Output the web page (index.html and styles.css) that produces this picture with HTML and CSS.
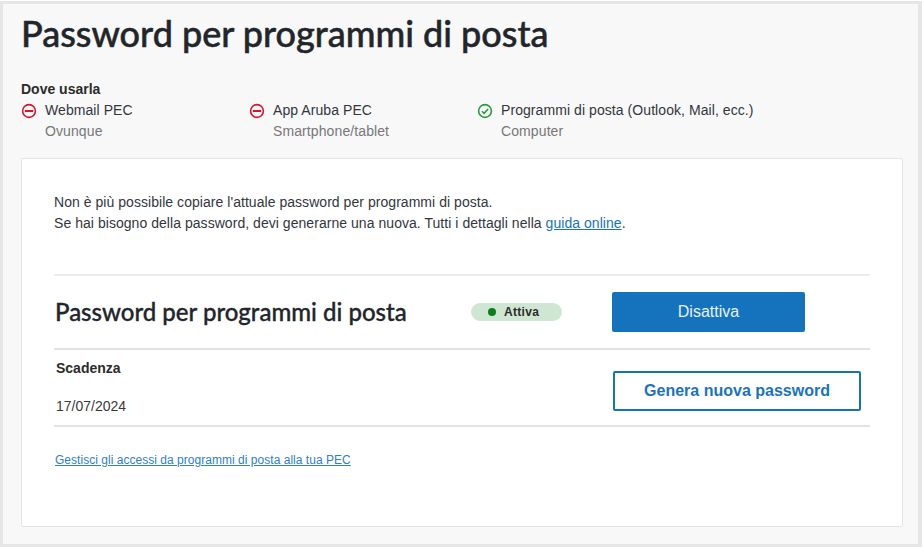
FILE: index.html
```html
<!DOCTYPE html>
<html lang="it">
<head>
<meta charset="utf-8">
<title>Password per programmi di posta</title>
<link rel="stylesheet" href="styles.css">
</head>
<body>
<main class="frame">
  <h1 class="title">Password per programmi di posta</h1>
  <h2 class="where-title">Dove usarla</h2>
  <ul class="where">
    <li class="where-item where-webmail">
      <svg class="icon" viewBox="0 0 16 16" aria-hidden="true"><circle cx="8" cy="8" r="6.4" class="stroke-red"/><path d="M3.8 8h8.4" class="stroke-red bar"/></svg>
      <div><div class="where-name">Webmail PEC</div><div class="where-sub">Ovunque</div></div>
    </li>
    <li class="where-item where-app">
      <svg class="icon" viewBox="0 0 16 16" aria-hidden="true"><circle cx="8" cy="8" r="6.4" class="stroke-red"/><path d="M3.8 8h8.4" class="stroke-red bar"/></svg>
      <div><div class="where-name">App Aruba PEC</div><div class="where-sub">Smartphone/tablet</div></div>
    </li>
    <li class="where-item">
      <svg class="icon" viewBox="0 0 16 16" aria-hidden="true"><circle cx="8" cy="8" r="6.4" class="stroke-green"/><path d="M4.9 8.2l2.2 2.2 4-4.4" class="stroke-green"/></svg>
      <div><div class="where-name">Programmi di posta (Outlook, Mail, ecc.)</div><div class="where-sub">Computer</div></div>
    </li>
  </ul>
  <section class="card">
    <p class="intro">Non è più possibile copiare l'attuale password per programmi di posta.<br>Se hai bisogno della password, devi generarne una nuova. Tutti i dettagli nella <a href="#">guida online</a>.</p>
    <div class="row row-status">
      <h2 class="row-title">Password per programmi di posta</h2>
      <span class="badge"><span class="dot"></span>Attiva</span>
      <button class="btn btn-primary" type="button">Disattiva</button>
    </div>
    <div class="row row-expiry">
      <div class="expiry">
        <div class="expiry-label">Scadenza</div>
        <div class="expiry-date">17/07/2024</div>
      </div>
      <button class="btn btn-outline" type="button">Genera nuova password</button>
    </div>
    <a class="manage" href="#">Gestisci gli accessi da programmi di posta alla tua PEC</a>
  </section>
</main>
</body>
</html>
```
FILE: styles.css
```css
* { box-sizing: border-box; }
html, body { margin: 0; padding: 0; background: #fff; }
body { font-family: "Liberation Sans", Arial, sans-serif; color: #2b2b2b; }
.frame {
  width: 922px;
  height: 546px;
  margin-top: 1px;
  padding: 0 16px 0 18px;
  background: #f8f8f8;
  border: 3px solid #e6e6e6;
  border-right-width: 4px;
}
.title {
  margin: 0;
  padding-top: 7px;
  font: 500 36px/44px Lato, sans-serif;
  -webkit-text-stroke: .5px #22262b;
  color: #22262b;
}
.where-title {
  margin: 0;
  padding-top: 26px;
  font: 700 14px/17px "Liberation Sans", Arial, sans-serif;
  color: #2b2b2b;
}
.where { display: flex; list-style: none; margin: 0; padding: 2px 0 0; height: 60px; }
.where-item { display: flex; align-items: flex-start; }
.where-webmail { width: 228px; }
.where-app { width: 228px; }
.icon { width: 16px; height: 16px; margin-right: 8px; margin-top: 3px; fill: none; flex: none; }
.stroke-red, .stroke-green { fill: none; stroke-width: 1.6; }
.stroke-red { stroke: #d9122f; }
.bar { stroke-width: 2; }
.stroke-green { stroke: #2b9a3c; }
.where-name { font-size: 14px; line-height: 21px; letter-spacing: .07px; color: #33373d; }
.where-sub { font-size: 14px; line-height: 21px; letter-spacing: .1px; color: #777; }
.card {
  width: 882px;
  height: 369px;
  padding: 33px 32px 0;
  background: #fff;
  border: 1px solid #e4e4e4;
  border-radius: 2px;
}
.intro { margin: 0; font-size: 14px; line-height: 21px; letter-spacing: .045px; color: #33373d; }
.intro a { color: #1a73c0; }
.row { display: flex; align-items: center; border-bottom: 2px solid #e2e2e2; }
.row-status { margin-top: 40px; height: 76px; border-top: 2px solid #ececec; }
.row-title {
  margin: 0 0 0 1px;
  width: 416px;
  font: 500 24px/30px Lato, sans-serif;
  -webkit-text-stroke: .35px #22262b;
  color: #22262b;
}
.badge {
  display: flex; align-items: center;
  width: 91px; height: 18px; padding-left: 17px;
  border-radius: 9px; background: #cfe7d2;
  font-size: 12px; font-weight: 700; letter-spacing: .3px; color: #2b2b2b;
}
.dot { width: 8px; height: 8px; border-radius: 50%; background: #0b7f1c; margin-right: 8px; }
.btn { font-family: "Liberation Sans", Arial, sans-serif; border-radius: 2px; padding: 0; }
.btn-primary { margin-left: 50px; width: 193px; height: 40px; background: #1573bd; border: 0; color: #e8f2fa; font-size: 16px; }
.row-expiry { height: 77px; justify-content: space-between; padding: 0 9px 0 2px; }
.expiry { margin-bottom: 2px; }
.expiry-label { font-size: 14px; font-weight: 700; line-height: 16px; color: #2b2b2b; }
.expiry-date { margin-top: 22px; font-size: 14px; line-height: 16px; color: #3a3a3a; }
.btn-outline { margin-top: 7px; width: 248px; height: 40px; background: #fff; border: 2px solid #1573bd; color: #1a73c0; font-size: 16px; font-weight: 700; }
.manage { display: inline-block; margin: 26px 0 0 1px; font-size: 12px; line-height: 15px; letter-spacing: .03px; color: #2f80c8; }
```
